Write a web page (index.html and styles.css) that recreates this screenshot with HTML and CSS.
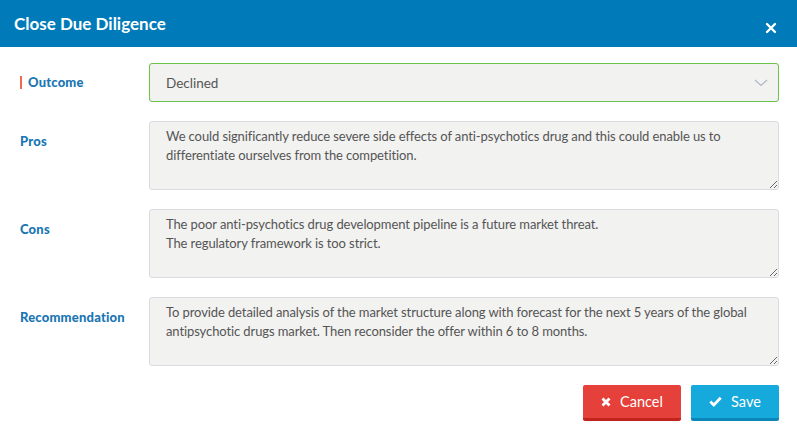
FILE: index.html
```html
<!DOCTYPE html>
<html lang="en">
<head>
    <meta charset="UTF-8">
    <title>Close Due Diligence</title>
    <link rel="stylesheet" href="styles.css">
</head>
<body>
<div class="modal">
    <div class="modal-head">
        <span class="modal-title">Close Due Diligence</span>
        <svg class="close" width="12" height="12" viewBox="0 0 12 12">
            <path d="M2 2 L10 10 M10 2 L2 10" stroke="#fff" stroke-width="2.4" stroke-linecap="round"/>
        </svg>
    </div>
    <form class="modal-body">
        <div class="row">
            <label class="lbl req">Outcome</label>
            <div class="select">
                <span>Declined</span>
                <svg width="14" height="8" viewBox="0 0 14 8">
                    <path d="M1 1 L7 6.5 L13 1" fill="none" stroke="#aeb8c8" stroke-width="1.2"/>
                </svg>
            </div>
        </div>
        <div class="row">
            <label class="lbl">Pros</label>
            <textarea class="area">We could significantly reduce severe side effects of anti-psychotics drug and this could enable us to differentiate ourselves from the competition.</textarea>
        </div>
        <div class="row">
            <label class="lbl">Cons</label>
            <textarea class="area">The poor anti-psychotics drug development pipeline is a future market threat.
The regulatory framework is too strict.</textarea>
        </div>
        <div class="row">
            <label class="lbl">Recommendation</label>
            <textarea class="area">To provide detailed analysis of the market structure along with forecast for the next 5 years of the global antipsychotic drugs market. Then reconsider the offer within 6 to 8 months.</textarea>
        </div>
        <div class="actions">
            <button type="button" class="btn btn-cancel">
                <svg width="10" height="10" viewBox="0 0 10 10">
                    <path d="M1.5 1.5 L8.5 8.5 M8.5 1.5 L1.5 8.5" stroke="#fff" stroke-width="2.8"/>
                </svg>
                Cancel
            </button>
            <button type="button" class="btn btn-save">
                <svg width="13" height="11" viewBox="0 0 13 11">
                    <path d="M1.3 5.6 L4.8 9 L11.7 1.8" fill="none" stroke="#fff" stroke-width="2.8"/>
                </svg>
                Save
            </button>
        </div>
    </form>
</div>
</body>
</html>
```

FILE: styles.css
```css
body {
    margin: 0;
    background: #fff;
    font-family: Lato, "Open Sans", sans-serif;
}
.modal {
    width: 797px;
}
.modal-head {
    height: 47px;
    background-color: #007ab8;
    display: flex;
    align-items: center;
    justify-content: space-between;
    padding: 0 20px 0 14px;
    box-sizing: border-box;
}
.modal-title {
    color: #fff;
    font-size: 17px;
    font-weight: bold;
}
.close {
    margin-top: 8px;
}
.modal-body {
    padding: 16px 18px 0 20px;
    display: flex;
    flex-direction: column;
    gap: 19px;
}
.row {
    display: flex;
    align-items: flex-start;
}
.lbl {
    width: 129px;
    flex: none;
    line-height: 40px;
    font-size: 13px;
    font-weight: 900;
    color: #1a76b3;
    letter-spacing: 0.2px;
}
.lbl.req {
    display: flex;
    align-items: center;
    line-height: 39px;
}
.lbl.req::before {
    content: "";
    width: 2px;
    height: 13px;
    background: #f0694f;
    margin-right: 6px;
}
.select {
    flex: 1;
    height: 39px;
    box-sizing: border-box;
    border: 1px solid #6cc24a;
    border-radius: 3px;
    background: #f2f2f0;
    display: flex;
    align-items: center;
    justify-content: space-between;
    padding: 0 10px 0 16px;
    font-size: 13.5px;
    color: #555;
}
.area {
    flex: 1;
    height: 69px;
    box-sizing: border-box;
    border: 1px solid #d9dbe0;
    border-radius: 3px;
    background: #f2f2f0;
    padding: 5px 16px;
    font-family: Lato, "Open Sans", sans-serif;
    font-size: 13px;
    letter-spacing: -0.1px;
    line-height: 18.6px;
    color: #555;
    margin: 0;
    outline: none;
}
.actions {
    display: flex;
    justify-content: flex-end;
    gap: 10px;
}
.btn {
    height: 36px;
    border: 0;
    border-bottom: 3px solid;
    border-radius: 2px;
    color: #fff;
    font-family: Lato, "Open Sans", sans-serif;
    font-size: 14.5px;
    display: flex;
    align-items: center;
    justify-content: center;
    gap: 9px;
    padding: 0;
}
.btn-cancel {
    width: 98px;
    background: #e5413a;
    border-bottom-color: #c1221b;
}
.btn-save {
    width: 88px;
    background: #15a9dc;
    border-bottom-color: #0a86b8;
}
```
